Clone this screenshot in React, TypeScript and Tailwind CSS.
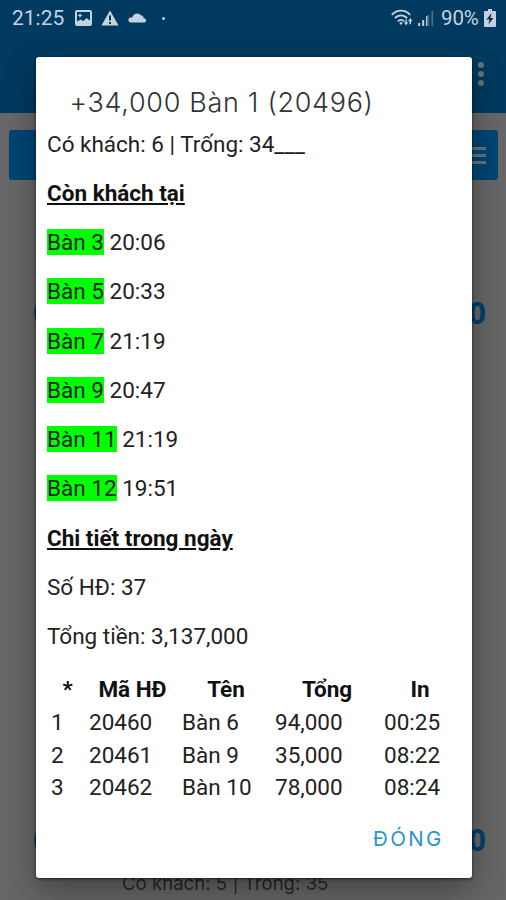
interface OpenTable {
    name: string;
    time: string;
}

interface Invoice {
    id: number;
    code: string;
    table: string;
    total: string;
    printedAt: string;
}

const openTables: OpenTable[] = [
    { name: "Bàn 3", time: "20:06" },
    { name: "Bàn 5", time: "20:33" },
    { name: "Bàn 7", time: "21:19" },
    { name: "Bàn 9", time: "20:47" },
    { name: "Bàn 11", time: "21:19" },
    { name: "Bàn 12", time: "19:51" },
];

const invoices: Invoice[] = [
    { id: 1, code: "20460", table: "Bàn 6", total: "94,000", printedAt: "00:25" },
    { id: 2, code: "20461", table: "Bàn 9", total: "35,000", printedAt: "08:22" },
    { id: 3, code: "20462", table: "Bàn 10", total: "78,000", printedAt: "08:24" },
];

function StatusBar() {
    return (
        <div className="flex h-[36px] items-center pl-[12px] pr-[10px] font-[Roboto,sans-serif] text-[#c3d3de]">
            <span className="w-[53px] whitespace-nowrap text-[21px] leading-[36px]">21:25</span>
            {/* picture */}
            <svg className="ml-[10px] h-[16px] w-[17px]" viewBox="0 0 17 16">
                <rect x="1" y="1" width="15" height="14" rx="1" fill="none" stroke="currentColor" strokeWidth="2" />
                <path d="M2 14V11.500l3.500-2 3 1.500 3-3L15 10.500V14z" fill="currentColor" />
                <path d="M5 3l.8 1.700 1.700.8-1.700.8L5 8l-.8-1.700-1.700-.8 1.700-.8z" fill="currentColor" />
            </svg>
            {/* warning */}
            <svg className="ml-[9px] h-[16px] w-[18px]" viewBox="0 0 18 16">
                <path d="M9 0.500L17.600 15.500H.4z" fill="currentColor" />
                <path d="M9 5.500v5M9 12v2" stroke="#06395f" strokeWidth="2" />
            </svg>
            {/* cloud */}
            <svg className="ml-[9px] mt-[-2px] h-[12px] w-[19px]" viewBox="0 0 19 12">
                <path d="M2.500 11.500a2.500 2.500 0 0 1-.2-4.900c.6-.2 1.400-.2 1.900.1A5 5 0 0 1 13 4.300a3 3 0 0 1 2.600 3 2.150 2.150 0 0 1 .9 4.200z" fill="currentColor" />
            </svg>
            <span className="ml-[15px] size-[3px] rounded-full bg-[#c3d3de]" />
            <div className="flex-1" />
            {/* wifi with traffic arrows */}
            <svg className="h-[18px] w-[22px]" viewBox="0 0 22 18">
                <g fill="none" stroke="currentColor" strokeWidth="1.800">
                    <path d="M.8 5.800C5.800.3 14.200.3 19.200 5.800" />
                    <path d="M3.800 9.200C7.300 5.300 12.700 5.300 16.200 9.200" />
                    <path d="M6.800 12.300c1.900-2 4.500-2 6.400 0" />
                </g>
                <path d="M8.200 14L10 12.800l1.800 1.200L10 16z" fill="currentColor" />
                <path d="M13 13.300h1.400v-3h1.400v3h1.400l-2.100 3.200zM17 12.300l2.300-3.300 2.200 3.300H20v3h-1.500v-3z" fill="currentColor" />
            </svg>
            {/* cell signal */}
            <svg className="ml-[5px] h-[17px] w-[16px]" viewBox="0 0 16 17">
                <path d="M1.200 13v3M5.200 10v6" stroke="currentColor" strokeWidth="2" />
                <path d="M8.800 6v10" stroke="currentColor" strokeWidth="1.500" />
                <path d="M10.300 5v11M14.300 1v15" stroke="#44708d" strokeWidth="1.800" />
            </svg>
            <span className="ml-[7px] w-[39px] whitespace-nowrap text-[20.500px] leading-[36px] tracking-[-0.1px]">90%</span>
            {/* charging battery */}
            <svg className="ml-[4px] h-[18px] w-[12px]" viewBox="0 0 12 18">
                <path d="M4 0h4v2h3q1 0 1 1v14q0 1-1 1H1q-1 0-1-1V3q0-1 1-1h3z" fill="currentColor" />
                <path d="M7.500 4L2.500 10.500h3L4.500 15.500l5-6.500h-3z" fill="#06304f" />
            </svg>
        </div>
    );
}

// Order list underneath the dialog, already dimmed by the backdrop
function DimmedPage() {
    return (
        <div className="flex h-[900px] flex-col bg-[#666]">
            <header className="h-[113px] bg-[#003a60]">
                <StatusBar />
                <div className="flex flex-col items-end gap-[3px] pr-[22px] pt-[26px]">
                    <span className="size-[6px] rounded-full bg-[#68737b]" />
                    <span className="size-[6px] rounded-full bg-[#68737b]" />
                    <span className="size-[6px] rounded-full bg-[#68737b]" />
                </div>
            </header>
            <div className="ml-[9px] mr-[8px] mt-[17px] flex h-[50px] flex-col items-end justify-center gap-[4px] rounded-[3px] bg-[#004473] pr-[12px]">
                <span className="h-[3px] w-[24px] bg-[#66737c]" />
                <span className="h-[3px] w-[24px] bg-[#66737c]" />
                <span className="h-[3px] w-[24px] bg-[#66737c]" />
            </div>
            <div className="mt-[112px] flex h-[40px] items-center justify-between pl-[33px] pr-[20px] font-['Open_Sans',sans-serif] text-[30px] font-bold text-[#003f6b]">
                <span>0</span>
                <span>0</span>
            </div>
            <div className="mt-[487px] flex h-[40px] items-center justify-between pl-[33px] pr-[20px] font-['Open_Sans',sans-serif] text-[30px] font-bold text-[#003f6b]">
                <span>0</span>
                <span>0</span>
            </div>
            <p className="mt-[11px] pl-[122px] font-[Inter,sans-serif] text-[18.500px] leading-[27px] tracking-[0.050px] text-[#262626]">Có khách: 5 | Trống: 35</p>
        </div>
    );
}

function InvoiceTable() {
    return (
        <table className="mt-[24px] ml-[3px] w-[409px] table-fixed border-collapse text-left">
            <thead>
                <tr className="h-[32.400px] text-center font-bold text-[#111]">
                    <th className="w-[35px] p-0">*</th>
                    <th className="w-[94px] p-0 pl-[1px]">Mã HĐ</th>
                    <th className="w-[94px] p-0">Tên</th>
                    <th className="w-[108px] p-0">Tổng</th>
                    <th className="w-[78px] p-0">In</th>
                </tr>
            </thead>
            <tbody>
                {invoices.map(invoice => (
                    <tr key={invoice.id} className="h-[32.400px]">
                        <td className="p-0 pt-[1px] pl-[1px]">{invoice.id}</td>
                        <td className="p-0 pt-[1px] pl-[4px]">{invoice.code}</td>
                        <td className="p-0 pt-[1px] pl-[3px]">{invoice.table}</td>
                        <td className="p-0 pt-[1px] pl-[2px]">{invoice.total}</td>
                        <td className="p-0 pt-[1px] pl-[3px]">{invoice.printedAt}</td>
                    </tr>
                ))}
            </tbody>
        </table>
    );
}

function SummaryDialog() {
    return (
        <div
            role="dialog"
            className="absolute left-[35.500px] top-[57px] flex h-[821px] w-[436px] flex-col rounded-[3px] bg-white shadow-[0_12px_30px_rgba(0,0,0,0.35),0_1px_3px_rgba(0,0,0,0.6)]"
        >
            <h1 className="pl-[34px] pt-[28px] font-[Inter,sans-serif] text-[27px] font-light leading-[36px] tracking-[0.680px] whitespace-nowrap text-[#333]">
                +34,000 Bàn 1 (20496)
            </h1>
            <div className="flex flex-1 flex-col pl-[11.500px] pt-[9.800px] font-[Roboto,sans-serif] text-[22.500px] leading-[26.250px] text-[#222]">
                <div className="flex flex-col gap-[22.980px]">
                    <p>Có khách: 6 | Trống: 34___</p>
                    <p className="font-bold text-[#111] underline">Còn khách tại</p>
                    {openTables.map(table => (
                        <p key={table.name}>
                            <span className="bg-[#00ff00]">{table.name}</span> {table.time}
                        </p>
                    ))}
                    <p className="font-bold text-[#111] underline">Chi tiết trong ngày</p>
                    <p>Số HĐ: 37</p>
                    <p>Tổng tiền: 3,137,000</p>
                </div>
                <InvoiceTable />
            </div>
            <div className="flex h-[60px] justify-end pr-[28px]">
                <button className="h-[42px] font-[Inter,sans-serif] text-[20.500px] leading-[42px] tracking-[2.300px] text-[#2b93d1]">ĐÓNG</button>
            </div>
        </div>
    );
}

export default function App() {
    return (
        <div className="relative h-[900px] w-[506px] overflow-hidden">
            <DimmedPage />
            <SummaryDialog />
        </div>
    );
}
